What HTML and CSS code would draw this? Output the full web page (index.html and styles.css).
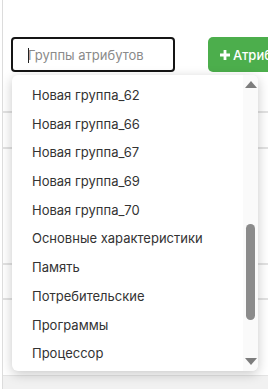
FILE: index.html
```html
<!DOCTYPE html>
<html lang="ru">
<head>
<meta charset="utf-8">
<link rel="stylesheet" href="styles.css">
</head>
<body>
<div class="page">
  <div class="toolbar">
    <div class="search"><span class="caret"></span><span class="placeholder">Группы атрибутов</span></div>
    <button class="btn-add"><svg class="plus" viewBox="0 0 10 10" width="10" height="10"><path d="M3.6 0h2.8v3.6H10v2.8H6.4V10H3.6V6.4H0V3.6h3.6z" fill="#fff"/></svg>Атрибут</button>
  </div>
  <div class="table">
    <div class="row r1"></div>
    <div class="row r2"></div>
    <div class="row r3"></div>
    <div class="row r4"></div>
    <div class="row r5"></div>
  </div>
  <div class="footer"></div>

  <div class="dropdown">
    <ul class="options">
      <li>Новая группа_62</li>
      <li>Новая группа_66</li>
      <li>Новая группа_67</li>
      <li>Новая группа_69</li>
      <li>Новая группа_70</li>
      <li>Основные характеристики</li>
      <li>Память</li>
      <li>Потребительские</li>
      <li>Программы</li>
      <li>Процессор</li>
    </ul>
    <div class="scrollbar">
      <span class="arrow up"></span>
      <div class="track"><div class="thumb"></div></div>
      <span class="arrow down"></span>
    </div>
  </div>
</div>
</body>
</html>
```

FILE: styles.css
```css
html, body {
  margin: 0;
  padding: 0;
  background: #fff;
  font-family: Inter, "Noto Sans", sans-serif;
  overflow: hidden;
}
.page {
  position: relative;
  margin-left: 2px;
  border-left: 1px solid #dcdcdc;
  height: 389px;
  padding-top: 37px;
  box-sizing: border-box;
  overflow: hidden;
}
.toolbar {
  display: flex;
  gap: 33px;
  padding-left: 8px;
  width: 400px;
}
.search {
  flex: none;
  width: 164px;
  height: 35px;
  box-sizing: border-box;
  border: 2px solid #151515;
  border-radius: 4px;
  display: flex;
  align-items: center;
  padding-left: 15px;
  position: relative;
}
.caret {
  width: 1px;
  height: 15px;
  background: #222;
  position: absolute;
  left: 15px;
  top: 9px;
}
.placeholder {
  font-size: 13px;
  color: #8a8a8a;
  white-space: nowrap;
}
.btn-add {
  flex: none;
  height: 35px;
  width: 90px;
  border: 0;
  border-radius: 5px;
  background: #4cae4c;
  color: #fff;
  font-family: Inter, "Noto Sans", sans-serif;
  font-size: 13px;
  font-weight: 500;
  display: flex;
  align-items: center;
  gap: 3px;
  padding: 0 0 0 12px;
  white-space: nowrap;
}
.plus { flex: none; }
.row {
  border-bottom: 2px solid #e2e2e2;
  box-sizing: border-box;
}
.r1 { height: 41px; }
.r2 { height: 36px; }
.r3 { height: 116px; }
.r4 { height: 35px; }
.r5 { height: 78px; border-bottom: 0; }
.footer {
  position: absolute;
  left: 0; right: 0; bottom: 0;
  height: 13px;
  background: #f1f1f1;
  border-top: 1px solid #e4e4e4;
}
.dropdown {
  position: absolute;
  left: 9px;
  top: 75px;
  width: 246px;
  height: 296px;
  background: #fff;
  border-radius: 6px;
  box-shadow: 0 3px 12px rgba(0,0,0,0.22);
  display: flex;
  overflow: hidden;
}
.options {
  list-style: none;
  margin: 0;
  padding: 6px 0 0 0;
  flex: 1;
}
.options li {
  height: 28.7px;
  line-height: 28.7px;
  padding-left: 20px;
  font-size: 13px;
  color: #333;
  white-space: nowrap;
}
.scrollbar {
  width: 15px;
  background: #fafafa;
  display: flex;
  flex-direction: column;
  align-items: center;
  padding: 4px 0;
  box-sizing: border-box;
}
.arrow {
  width: 0; height: 0;
  border-left: 6px solid transparent;
  border-right: 6px solid transparent;
}
.arrow.up { border-bottom: 7px solid #7d7d7d; margin-top: 2px; }
.arrow.down { border-top: 7px solid #7d7d7d; margin-bottom: 2px; }
.track {
  flex: 1;
  width: 9px;
  position: relative;
}
.thumb {
  position: absolute;
  left: 0;
  width: 9px;
  top: 136px;
  height: 96px;
  background: #8b8b8b;
  border-radius: 5px;
}
```
